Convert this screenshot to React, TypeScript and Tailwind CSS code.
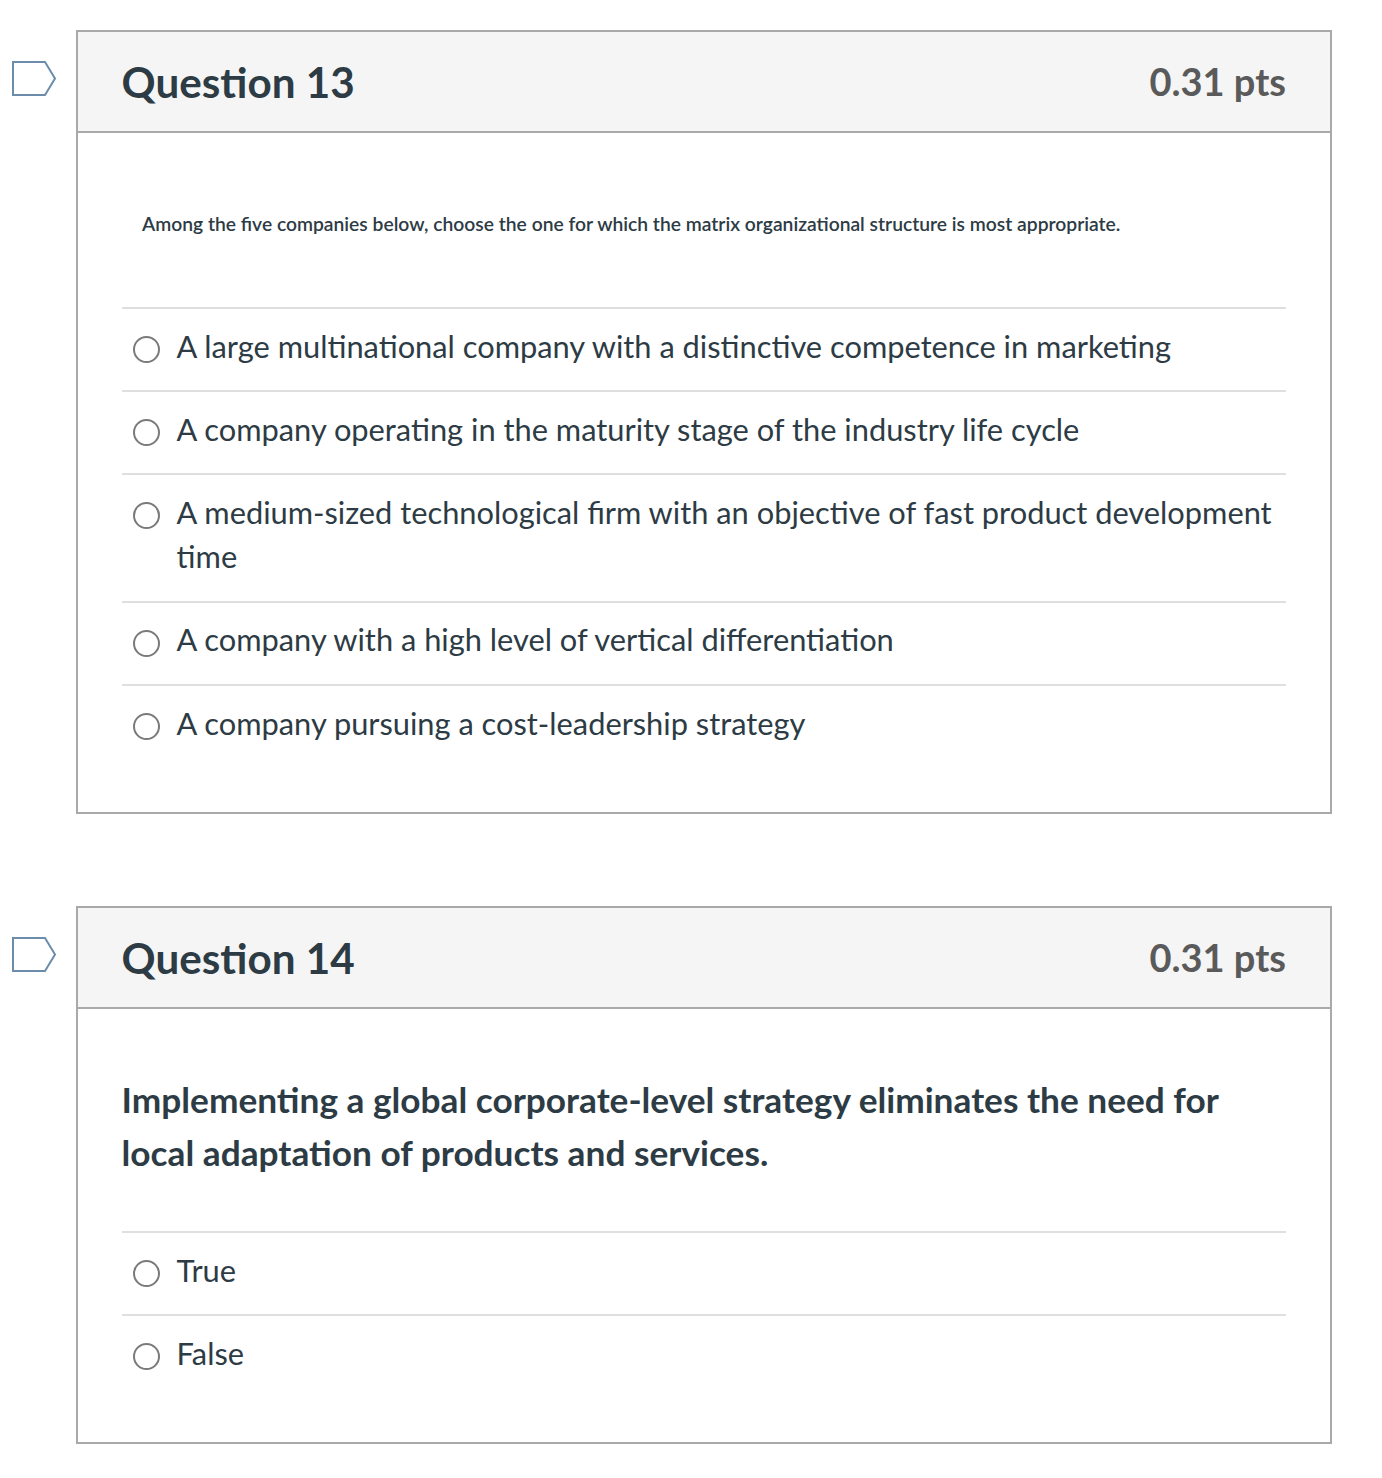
const font = { fontFamily: "Lato, 'Open Sans', sans-serif" };

function Flag() {
  return (
    <svg width="45" height="36" viewBox="0 0 45 36" className="block shrink-0" fill="none">
      <path d="M1 1 H33 L43 17.5 L33 34 H1 Z" stroke="#6b8dab" strokeWidth="2" fill="#fff" />
    </svg>
  );
}

function Radio() {
  return <span className="block w-[27px] h-[27px] shrink-0 rounded-full border-2 border-[#7a7a7a] bg-white" />;
}

function Answer({ text }: { text: string }) {
  return (
    <div className="flex items-start border-t-2 border-[#dfdfdf] pl-[11px] pt-[15.7px] pb-[21.55px]">
      <div className="pt-[11.3px] mr-[16.6px]"><Radio /></div>
      <div className="text-[30.8px] leading-[44px] text-[#2d3b45]">{text}</div>
    </div>
  );
}

function Card({
  title,
  question,
  answers,
  className,
}: {
  title: string;
  question: React.ReactNode;
  answers: string[];
  className: string;
}) {
  return (
    <div className={`flex items-start ${className}`}>
      <div className="w-[76px] pl-[12px] pt-[31px] shrink-0"><Flag /></div>
      <div className="w-[1256px] shrink-0 border-2 border-[#a9a9a9] bg-white">
        <div className="h-[101px] flex items-center justify-between bg-[#f5f5f5] border-b-2 border-[#a9a9a9] pl-[43.6px] pr-[44px]">
          <div className="text-[42.2px] font-bold text-[#2d3b45] pt-[1px]">{title}</div>
          <div className="text-[38px] font-bold text-[#5a5a5a]">0.31 pts</div>
        </div>
        <div className="px-[44px] pb-[45px]">
          {question}
          {answers.map((a) => <Answer key={a} text={a} />)}
        </div>
      </div>
    </div>
  );
}

export default function App() {
  return (
    <div className="w-[1382px] h-[1478px] bg-white pt-[30px] overflow-hidden" style={font}>
      <Card
        title="Question 13"
        className="mb-[91.75px]"
        question={
          <div className="h-[174px] pt-[77px] pl-[20px] text-[19.28px] leading-[28px] font-semibold text-[#2d3b45]">
            Among the five companies below, choose the one for which the matrix organizational structure is most appropriate.
          </div>
        }
        answers={[
          "A large multinational company with a distinctive competence in marketing",
          "A company operating in the maturity stage of the industry life cycle",
          "A medium-sized technological firm with an objective of fast product development time",
          "A company with a high level of vertical differentiation",
          "A company pursuing a cost-leadership strategy",
        ]}
      />
      <Card
        title="Question 14"
        className=""
        question={
          <div className="h-[222px] pt-[64px] -ml-[0.4px] text-[35.24px] leading-[53px] font-bold text-[#2d3b45]">
            Implementing a global corporate-level strategy eliminates the need for local adaptation of products and services.
          </div>
        }
        answers={["True", "False"]}
      />
    </div>
  );
}
